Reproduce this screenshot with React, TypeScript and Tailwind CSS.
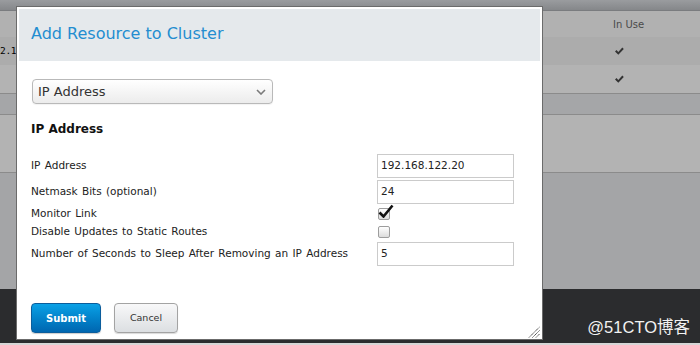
import React from "react";

const Check = ({ className }: { className?: string }) => (
  <svg viewBox="0 0 9 8" className={className} fill="currentColor">
    <polygon points="0,4.6 1.5,3.1 3.3,4.9 7.3,0.5 8.8,2 3.3,7.8" />
  </svg>
);

function Row({ label, children, h }: { label: string; children: React.ReactNode; h: string }) {
  return (
    <div className={`flex items-center ${h}`}>
      <div className="w-[346px] text-[10.5px] text-[#222] [word-spacing:1px]">{label}</div>
      <div className="flex items-center">{children}</div>
    </div>
  );
}

function TextInput({ value }: { value: string }) {
  return (
    <div className="w-[137px] h-[24px] border border-[#cbcbcb] bg-white flex items-center pl-[3px] text-[10.5px] text-[#222]">
      {value}
    </div>
  );
}

export default function App() {
  return (
    <div
      className="relative w-[700px] h-[345px] overflow-hidden flex flex-col"
      style={{ fontFamily: '"DejaVu Sans", Verdana, sans-serif' }}
    >
      {/* background table */}
      <div className="h-[11px] bg-gradient-to-b from-[#9a9c9f] to-[#85878a] border-b border-[#7a7c7f]" />
      <div className="h-[26px] bg-[#b1b1b1] flex items-center pl-[613px] text-[10px] text-[#4a4a4a]">In Use</div>
      <div className="h-[28px] bg-[#acacac] flex items-center relative">
        <span className="absolute left-0 text-[9.5px] tracking-[-0.3px] text-black" style={{ fontFamily: '"DejaVu Sans Mono", monospace' }}>2.1</span>
        <div className="pl-[615px] text-[#333]"><Check className="w-[9px] h-[8px]" /></div>
      </div>
      <div className="h-[28px] bg-[#b3b3b3] flex items-center">
        <div className="pl-[615px] text-[#333]"><Check className="w-[9px] h-[8px]" /></div>
      </div>
      <div className="h-[1px] bg-[#8b8b8b]" />
      <div className="h-[20px] bg-[#a5a6a8]" />
      <div className="h-[1px] bg-[#8b8b8b]" />
      <div className="h-[57px] bg-[#b3b3b3]" />
      <div className="h-[1px] bg-[#8b8b8b]" />
      <div className="h-[116px] bg-[#a4a5a7]" />
      <div className="h-[54px] bg-[#2b2c2e] flex items-center justify-end pr-[10px] pt-[22px]">
        <span
          className="text-[16.5px] text-[#f2f2f2]"
          style={{ fontFamily: '"Liberation Sans", "Noto Sans CJK SC", sans-serif' }}
        >
          @51CTO博客
        </span>
      </div>
      <div className="h-[2px] bg-[#d6d6d6]" />

      {/* dialog */}
      <div className="absolute left-[16px] top-[6px] w-[527px] h-[334px] border border-[#6b6b6b] bg-white p-[2px] flex flex-col">
        <div className="h-[52px] bg-[#e5e9ec] flex items-center pl-[12px] pb-[2px]">
          <span className="text-[16px] text-[#238dd0]">Add Resource to Cluster</span>
        </div>
        <div className="px-[12px] flex flex-col">
          <div className="mt-[18px] ml-[1px] w-[241px] h-[25px] rounded-[4px] border border-[#b9b9b9] bg-gradient-to-b from-white to-[#ececec] flex items-center justify-between pl-[5px] pr-[6px] shadow-[0_1px_1px_rgba(0,0,0,0.05)]">
            <span className="text-[13px] text-[#333]">IP Address</span>
            <svg viewBox="0 0 10 6" className="w-[10px] h-[6px]" fill="none" stroke="#7a7a7a" strokeWidth="1.6">
              <polyline points="1,1 5,5 9,1" />
            </svg>
          </div>
          <div className="mt-[17px] h-[16px] flex items-center text-[12px] font-bold text-[#111]">IP Address</div>
          <div className="mt-[17px] flex flex-col">
            <Row label="IP Address" h="h-[24px]">
              <TextInput value="192.168.122.20" />
            </Row>
            <div className="h-[2px]" />
            <Row label="Netmask Bits (optional)" h="h-[24px]">
              <TextInput value="24" />
            </Row>
            <Row label="Monitor Link" h="h-[19px]">
              <div className="relative ml-[1px] w-[12px] h-[12px] rounded-[2px] border border-[#9d9d9d] bg-gradient-to-b from-white to-[#dcdcdc]">
                <svg viewBox="0 0 16 14" className="absolute left-[-1px] top-[-5px] w-[16px] h-[14px]">
                  <path d="M1.5 8.5 L5.5 12.5 L14.5 1.5" fill="none" stroke="#111" strokeWidth="2.6" strokeLinejoin="miter" />
                </svg>
              </div>
            </Row>
            <Row label="Disable Updates to Static Routes" h="h-[17px]">
              <div className="ml-[1px] w-[12px] h-[12px] rounded-[2px] border border-[#9d9d9d] bg-gradient-to-b from-white to-[#dcdcdc]" />
            </Row>
            <div className="h-[2px]" />
            <Row label="Number of Seconds to Sleep After Removing an IP Address" h="h-[24px]">
              <TextInput value="5" />
            </Row>
          </div>
          <div className="mt-[37px] flex items-center gap-[13px]">
            <button className="w-[70px] h-[30px] rounded-[4px] border border-[#0b5d9c] bg-gradient-to-b from-[#0ba1e6] to-[#0066b0] text-white font-bold text-[10px] shadow-[0_1px_1px_rgba(0,0,0,0.2)]">
              Submit
            </button>
            <button className="w-[64px] h-[30px] rounded-[4px] border border-[#a3a3a3] bg-gradient-to-b from-[#f8f8f9] to-[#dcdfe2] text-[#333] text-[9.5px] shadow-[0_1px_1px_rgba(0,0,0,0.15)]">
              Cancel
            </button>
          </div>
        </div>
        <svg viewBox="0 0 12 12" className="absolute right-[2px] bottom-[1px] w-[12px] h-[12px]" stroke="#333" strokeWidth="1" strokeDasharray="1.2 0.6">
          <line x1="1" y1="11.5" x2="11.5" y2="1" />
          <line x1="4.5" y1="11.5" x2="11.5" y2="4.5" />
          <line x1="8" y1="11.5" x2="11.5" y2="8" />
        </svg>
      </div>
    </div>
  );
}
